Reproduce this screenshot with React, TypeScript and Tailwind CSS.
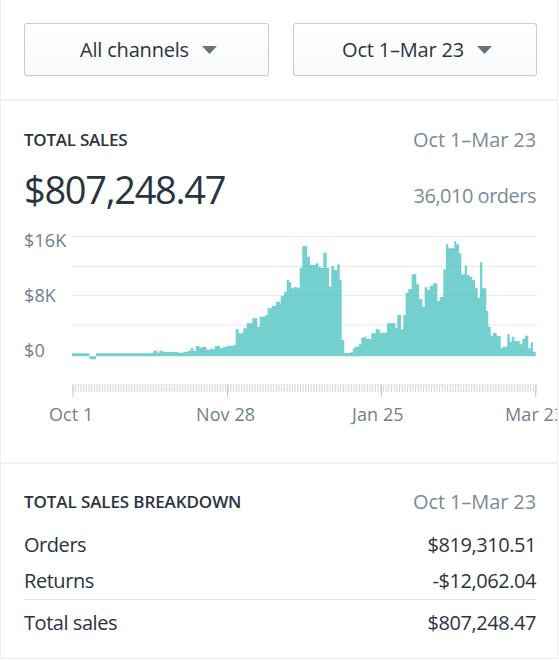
const leftTops: [number, number][] = [
  [268, 385], [288, 393], [460, 385], [472, 377], [478, 383], [490, 377], [515, 381], [535, 381], [550, 383],
  [565, 380], [572, 377], [580, 370], [588, 378], [598, 363], [605, 368], [620, 366], [630, 375], [645, 371],
  [660, 363], [668, 370], [680, 366], [700, 362], [707, 360], [716, 313], [730, 325], [740, 310], [757, 295],
  [772, 280], [779, 305], [795, 275], [803, 270], [815, 250], [828, 242], [840, 230],
];

const rightTops: [number, number][] = [
  [5, 235], [15, 212], [23, 200], [30, 165], [37, 172], [45, 190], [53, 186], [62, 188], [70, 128], [85, 63],
  [93, 95], [110, 120], [118, 115], [125, 125], [133, 128], [143, 83], [150, 128], [157, 185], [165, 123],
  [175, 135], [182, 118], [188, 165], [196, 345], [215, 384], [222, 382], [228, 370], [240, 365], [247, 358],
  [255, 338], [262, 335], [277, 342], [290, 325], [302, 313], [324, 323], [342, 295], [349, 293], [355, 310],
  [366, 270], [373, 313], [380, 270], [388, 204], [398, 192], [412, 148], [420, 178], [430, 222], [437, 245],
  [445, 187], [452, 195], [463, 182], [475, 175], [482, 228], [493, 216], [501, 133], [508, 58], [516, 70],
  [526, 70], [532, 48], [540, 58], [547, 85], [557, 148], [564, 122], [572, 150], [580, 155], [588, 165],
  [596, 188], [603, 218], [610, 112], [622, 190], [628, 258], [635, 305], [642, 332], [653, 324], [665, 333],
  [670, 370], [685, 365], [692, 328], [698, 350], [706, 335], [722, 348], [730, 358], [738, 342], [748, 332],
  [755, 370], [762, 352], [770, 380],
];

// chart svg starts at page y 228
const CHART_TOP = 228;
const toY = (zy: number) => 225 + zy / 3 - CHART_TOP;
const BASE = toY(394);

function areaPath() {
  const steps = [
    ...leftTops.map(([x, y]) => [x / 3, toY(y)]),
    ...rightTops.map(([x, y]) => [279 + x / 3, toY(y)]),
  ];
  let x0 = 72;
  let d = `M${x0} ${BASE}`;
  for (const [x, y] of steps) {
    if (x <= x0) continue;
    d += `L${x0.toFixed(1)} ${y.toFixed(1)}L${x.toFixed(1)} ${y.toFixed(1)}`;
    x0 = x;
  }
  return d + `L${x0.toFixed(1)} ${BASE}Z`;
}

const ticks = Array.from({ length: 174 }, (_, i) => 73 + i * (463 / 173));

function SalesChart() {
  return (
    <svg width={559} height={206} viewBox="0 0 559 206" className="block fill-[#6f7f8e] text-[18px] tracking-[0.1px]">
      {[236.7, 266.3, 295.3, 325].map((y) => (
        <line key={y} x1={72} x2={537} y1={y - CHART_TOP} y2={y - CHART_TOP} stroke="#e6e9ed" strokeWidth={1} />
      ))}
      <line x1={72} x2={537} y1={156.5} y2={156.5} stroke="#e6e9ed" strokeWidth={1} />
      <path d={areaPath()} fill="#47c1bf" fillOpacity={0.76} />
      <path d={`M89.5 ${BASE}H96V${BASE + 3}H89.5Z`} fill="#47c1bf" fillOpacity={0.76} />
      {ticks.map((x, i) => (
        <line key={i} x1={x} x2={x} y1={157} y2={164} stroke="#cfd5db" strokeWidth={1} />
      ))}
      {[73, 227.5, 381.5, 535.7].map((x) => (
        <line key={x} x1={x} x2={x} y1={157} y2={169} stroke="#c2c9d0" strokeWidth={1} />
      ))}
      <text x={24} y={19}>$16K</text>
      <text x={24} y={74}>$8K</text>
      <text x={24} y={129}>$0</text>
      <text x={49} y={193}>Oct 1</text>
      <text x={196} y={193}>Nov 28</text>
      <text x={352} y={193}>Jan 25</text>
      <text x={505} y={193}>Mar 23</text>
    </svg>
  );
}

function DropButton({ label, className }: { label: string; className: string }) {
  return (
    <button
      type="button"
      className={`h-[53px] pl-1 flex items-center justify-center gap-[13px] rounded-[3px] border border-[#c4cdd5] bg-gradient-to-b from-white to-[#f9fafb] text-[20px] tracking-[-0.2px] text-[#2a3440] shadow-[0_1px_0_0_rgba(22,29,37,0.05)] ${className}`}
    >
      <span>{label}</span>
      <svg width="15" height="8" viewBox="0 0 15 8" className="fill-[#637381]">
        <path d="M0 0h15L7.5 8z" />
      </svg>
    </button>
  );
}

function BreakdownRow({ name, value }: { name: string; value: string }) {
  return (
    <div className="flex items-center justify-between text-[20px] tracking-[-0.45px] text-[#2a3440]">
      <span>{name}</span>
      <span>{value}</span>
    </div>
  );
}

export default function App() {
  return (
    <div className="w-[559px] h-[660px] overflow-hidden bg-white font-['Open_Sans',sans-serif]">
      <div className="h-[659px] w-[558px] border-x border-b border-[#ebeef1] flex flex-col">
        <div className="h-[101px] shrink-0 pt-[23px] pl-[23px] pr-[20px] flex gap-6 border-b-2 border-[#eff1f4]">
          <DropButton label="All channels" className="w-[245px]" />
          <DropButton label="Oct 1–Mar 23" className="w-[244px]" />
        </div>

        <div className="h-[363px] shrink-0 border-b-2 border-[#eff1f4] overflow-hidden">
          <div className="pl-[23px] pr-[21px] pt-[24px] flex items-center justify-between">
            <span className="text-[17px] font-semibold tracking-[-0.25px] text-[#2a3440]">TOTAL SALES</span>
            <span className="text-[20px] tracking-[-0.1px] text-[#7b8a98]">Oct 1–Mar 23</span>
          </div>
          <div className="pl-[23px] pr-[21px] mt-[9px] flex items-end justify-between h-[50px]">
            <span className="text-[38px] leading-[50px] tracking-[-1.3px] text-[#2a3440]">$807,248.47</span>
            <span className="text-[20px] leading-[36px] tracking-[-0.5px] text-[#7b8a98]">36,010 orders</span>
          </div>
          <div className="mt-[14px] -ml-px">
            <SalesChart />
          </div>
        </div>

        <div className="pl-[23px] pr-[21px] pt-[23px]">
          <div className="flex items-center justify-between">
            <span className="text-[17px] font-semibold tracking-[-0.1px] text-[#2a3440]">TOTAL SALES BREAKDOWN</span>
            <span className="text-[20px] tracking-[-0.1px] text-[#7b8a98]">Oct 1–Mar 23</span>
          </div>
          <div className="mt-[13px] flex flex-col gap-[6px]">
            <BreakdownRow name="Orders" value="$819,310.51" />
            <BreakdownRow name="Returns" value="-$12,062.04" />
          </div>
          <div className="mt-[3px] pt-[8px] border-t border-[#e3e6ea]">
            <BreakdownRow name="Total sales" value="$807,248.47" />
          </div>
        </div>
      </div>
    </div>
  );
}
